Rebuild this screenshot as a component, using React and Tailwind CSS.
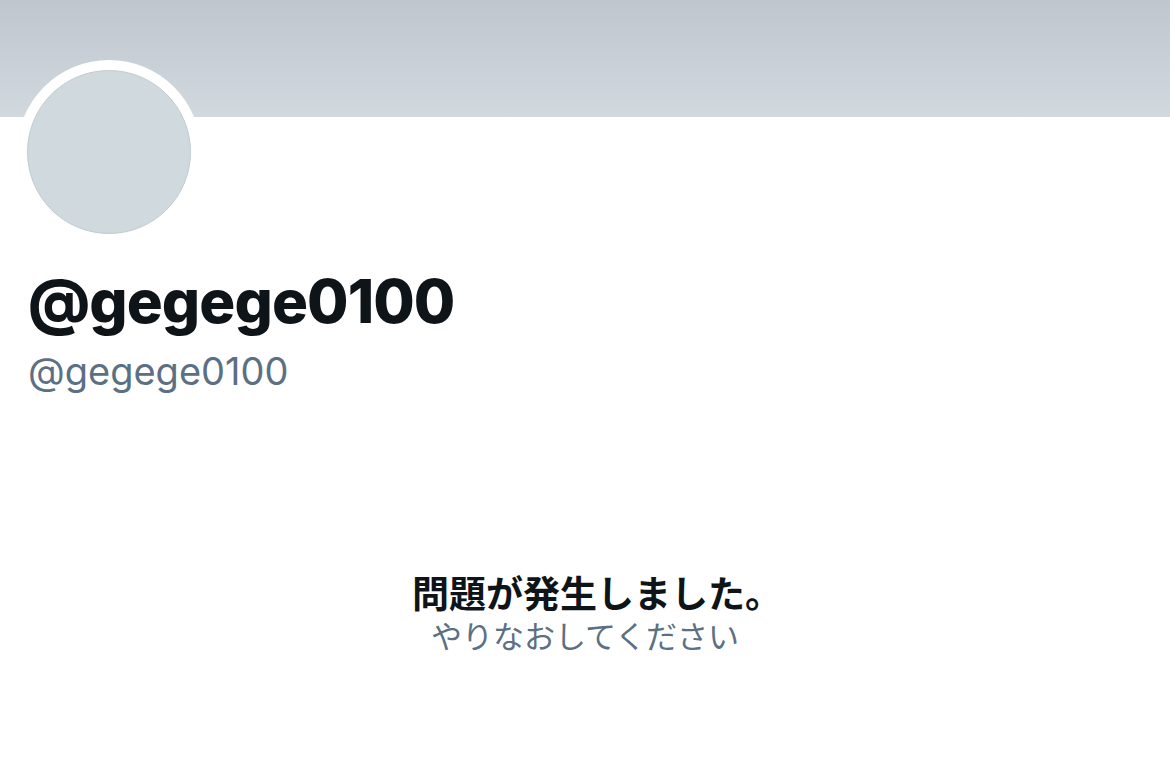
import React from "react";

const latin = { fontFamily: 'Inter, "Noto Sans CJK JP", sans-serif' };
const jp = { fontFamily: '"Noto Sans CJK JP", Inter, sans-serif' };

function App() {
  return (
    <div className="min-h-screen w-full bg-white" style={latin}>
      <div className="h-[117px] w-full bg-gradient-to-b from-[#bfc6cd] to-[#d1d9df]" />

      <div className="px-[17px]">
        <div className="-mt-[57px] w-[184px] h-[184px] rounded-full bg-white p-[10px]">
          <div className="w-full h-full rounded-full bg-[#d0d9de] border border-[#c2cbd1]" />
        </div>

        <div className="pl-[11px]">
          <h1 className="mt-[27px] text-[60px] leading-none font-extrabold tracking-[-0.9px] text-[#0f1419]">
            @gegege0100
          </h1>
          <p className="mt-[21px] text-[38px] leading-none text-[#5b7083]">@gegege0100</p>
        </div>
      </div>

      <div className="mt-[181px] flex flex-col items-center" style={jp}>
        <p className="text-[37px] leading-[1.15] font-bold text-[#0f1419] pl-[24px]">問題が発生しました。</p>
        <p className="mt-[3px] text-[31px] leading-[1.15] text-[#5b7083]">やりなおしてください</p>
      </div>
    </div>
  );
}

export default App;
